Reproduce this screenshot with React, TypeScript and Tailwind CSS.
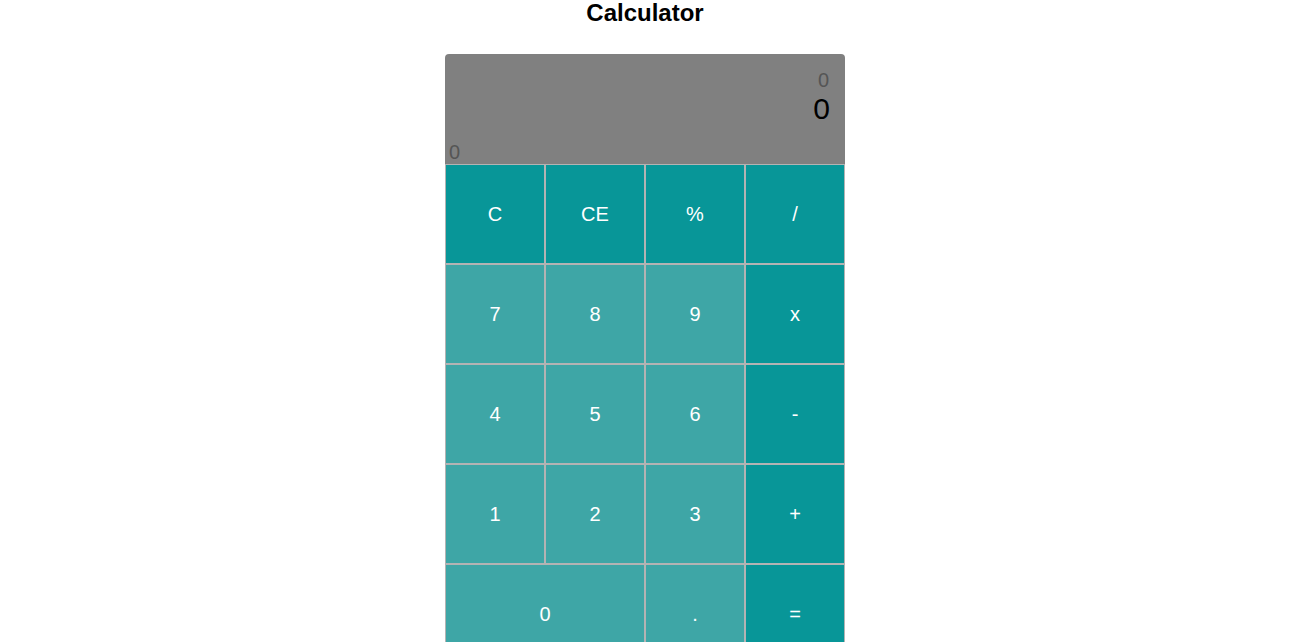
const keys: { label: string; op?: boolean; wide?: boolean }[] = [
  { label: "C", op: true },
  { label: "CE", op: true },
  { label: "%", op: true },
  { label: "/", op: true },
  { label: "7" },
  { label: "8" },
  { label: "9" },
  { label: "x", op: true },
  { label: "4" },
  { label: "5" },
  { label: "6" },
  { label: "-", op: true },
  { label: "1" },
  { label: "2" },
  { label: "3" },
  { label: "+", op: true },
  { label: "0", wide: true },
  { label: "." },
  { label: "=", op: true },
];

export default function App() {
  return (
    <div className="min-h-screen bg-white pr-[2px] font-['Liberation_Sans',Arial,sans-serif]">
      <h1 className="text-center text-[24px] font-bold leading-[26px] text-black">Calculator</h1>

      <div className="mx-auto mt-[28px] w-[400px]">
        {/* Display */}
        <div className="flex h-[110px] flex-col rounded-t bg-[#808080]">
          <div className="flex flex-col items-end pt-[15px] pr-[15px]">
            <span className="pr-[1px] text-[20px] leading-[23px] text-[#555]">0</span>
            <span className="text-[30px] leading-[34.5px] text-black">0</span>
          </div>
          <div className="mt-auto pl-[4px] text-[20px] leading-[23px] text-[#555]">0</div>
        </div>

        {/* Keypad */}
        <div className="grid grid-cols-4">
          {keys.map((k) => (
            <button
              key={k.label}
              className={`flex h-[100px] items-center justify-center border border-[#b3b3b3] text-[20px] text-white ${
                k.op ? "bg-[#089698]" : "bg-[#3ea6a6]"
              } ${k.wide ? "col-span-2" : ""}`}
            >
              {k.label}
            </button>
          ))}
        </div>
      </div>
    </div>
  );
}
